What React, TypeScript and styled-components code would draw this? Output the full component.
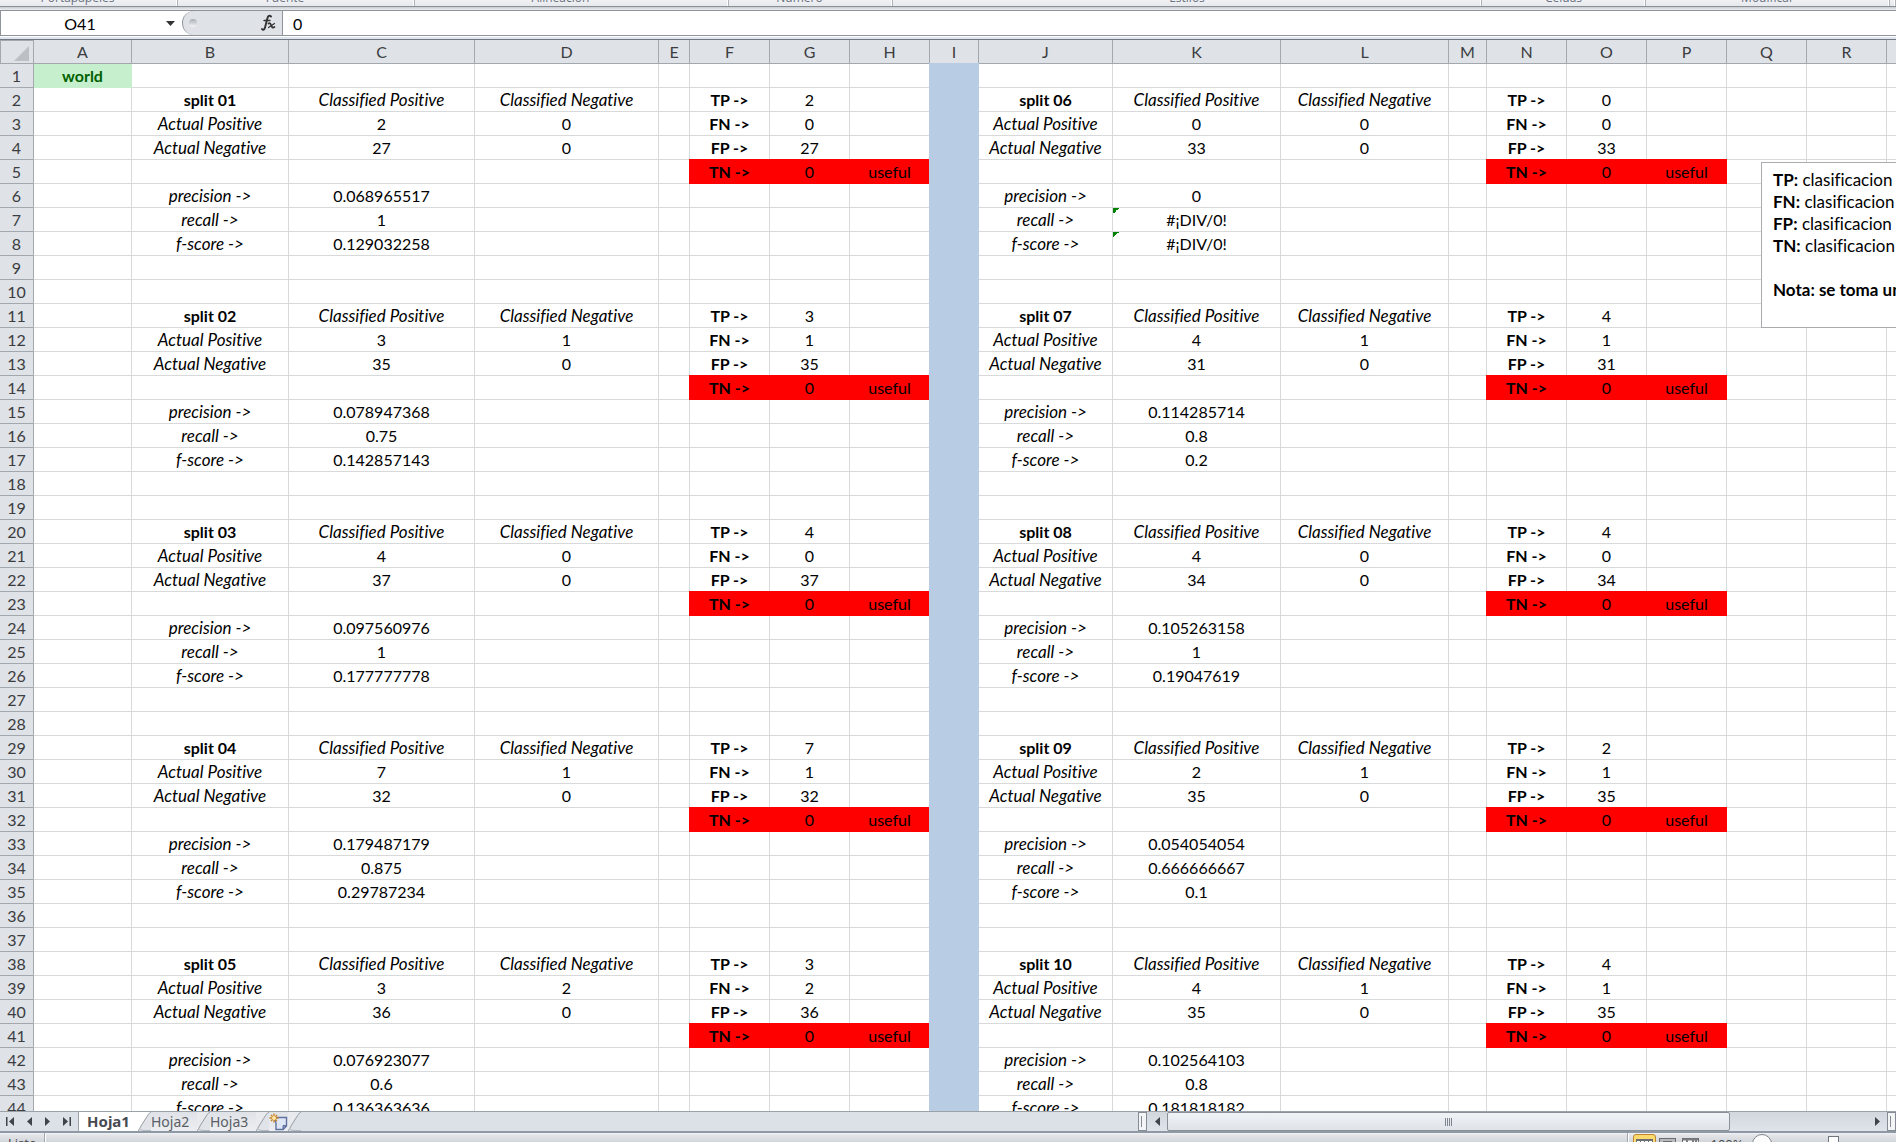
import React from "react";
import styled, { createGlobalStyle, css } from "styled-components";

const GlobalStyle = createGlobalStyle`
  * { box-sizing: border-box; }
  html, body { margin: 0; padding: 0; }
  body {
    font-family: Lato, "Noto Sans", sans-serif;
    font-size: 16px;
    font-variant-ligatures: none;
    color: #000;
    background: #fff;
  }
  button, input { font: inherit; color: inherit; margin: 0; padding: 0; border: 0; background: none; border-radius: 0; }
`;

/* ---------- shell ---------- */

const Shell = styled.div`
  display: flex;
  flex-direction: column;
  height: 100vh;
  overflow: hidden;
`;

/* ---------- ribbon ---------- */

const Ribbon = styled.div`
  flex: 0 0 7px;
  display: flex;
  align-items: flex-end;
  overflow: hidden;
  background: linear-gradient(#f0f1f4, #e6e9ed);
  border-bottom: 1px solid #8a8f95;
`;

const RibbonGroup = styled.div<{ $width?: number }>`
  flex: ${(p) => (p.$width ? `0 1 ${p.$width}px` : "1 1 0")};
  display: flex;
  align-items: flex-end;
  height: 100%;
  border-right: 1px solid #aeb3ba;
  box-shadow: inset -1px 0 0 #fff;
`;

const RibbonLabel = styled.span`
  flex: 1;
  text-align: center;
  font-family: "Open Sans", sans-serif;
  font-size: 12px;
  line-height: 16px;
  color: #6a7180;
`;

const Launcher = styled.button`
  flex: 0 0 22px;
  height: 16px;
  display: flex;
  align-items: center;
  padding-left: 14px;
  &::after { content: ""; width: 5px; height: 5px; margin-bottom: 4px; border-right: 2px solid #7d828b; border-bottom: 2px solid #7d828b; }
`;

/* ---------- formula bar ---------- */

const FormulaBar = styled.div`
  flex: 0 0 33px;
  padding: 3px 0;
  background: linear-gradient(#c8ccd0 0, #eceef1 3px, #fff 3px, #fff 30px, #dfe4ee 30px);
  border-bottom: 1px solid #6f7880;
`;

const FormulaRow = styled.div`
  display: flex;
  height: 26px;
  background: #fff;
  border: solid #8f949b;
  border-width: 1px 0 1px 1px;
`;

const NameInput = styled.input`
  width: 158px;
  text-align: center;
  outline: none;
`;

const NameDrop = styled.button`
  width: 23px;
  display: flex;
  align-items: center;
  justify-content: center;
`;

const FunctionArea = styled.div`
  width: 101px;
  display: flex;
  align-items: center;
  justify-content: space-between;
  padding: 0 6px;
  background: #dfe2e7;
  border: solid #8f949b;
  border-width: 0 1px 0 1px;
  border-radius: 12px 0 0 12px;
`;

const Knob = styled.span`
  width: 8px;
  height: 8px;
  border-radius: 4px;
  background: linear-gradient(#a9adb3, #f6f7f8);
`;

const FxButton = styled.button`
  display: flex;
`;

const FormulaInput = styled.input`
  flex: 1;
  padding-left: 10px;
  outline: none;
`;

/* ---------- sheet ---------- */

const SheetArea = styled.main`
  flex: 1;
  min-height: 0;
  position: relative;
  overflow: hidden;
`;

const Table = styled.table<{ $width: number }>`
  table-layout: fixed;
  width: ${(p) => p.$width}px;
  border-collapse: separate;
  border-spacing: 0;
`;

const headerCell = css`
  height: 24px;
  padding: 0;
  line-height: 23px;
  font-weight: 400;
  color: #3b3d40;
  background: #dfe2e7;
  border: solid #a3a8af;
  border-width: 0 1px 1px 0;
  text-align: center;
`;

const Heading = styled.th`
  ${headerCell}
`;

const Corner = styled.td`
  ${headerCell}
  border-width: 1px;
`;

const CornerMark = styled.svg`
  display: block;
  margin: 3px 4px 0 auto;
`;

const fills = { red: "#ff0000", green: "#c6efce", blue: "#b8cce4" };
type Fill = keyof typeof fills;
type Look = "plain" | "bold" | "italic";

const Cell = styled.td<{ $fill?: Fill; $look?: Look; $error?: boolean }>`
  height: 24px;
  padding: 0;
  line-height: 23px;
  text-align: center;
  white-space: nowrap;
  border: solid #d8d9db;
  border-width: 0 1px 1px 0;
  font-weight: ${(p) => (p.$look === "bold" ? 700 : 400)};
  ${(p) =>
    p.$look === "italic" &&
    css`
      font-style: italic;
      font-size: 17px;
    `}
  ${(p) =>
    p.$fill &&
    css`
      background: ${fills[p.$fill]};
      border-color: ${fills[p.$fill]};
    `}
  ${(p) =>
    (p.$fill === "red" || p.$fill === "blue") &&
    css`
      box-shadow: -1px 0 0 ${fills[p.$fill]}, 0 -1px 0 ${fills[p.$fill]}, -1px -1px 0 ${fills[p.$fill]};
    `}
  ${(p) => p.$fill === "green" && css`color: #006100;`}
  ${(p) =>
    p.$error &&
    css`
      background: linear-gradient(135deg, #008000 50%, transparent 50%) 0 0 / 6px 6px no-repeat;
    `}
`;

const Note = styled.aside`
  position: absolute;
  left: 1761px;
  top: 122px;
  width: 420px;
  height: 166px;
  padding: 6px 11px;
  background: #fff;
  border: 1px solid #a9abae;
  font-size: 17px;
  line-height: 22px;
  white-space: nowrap;
  p { margin: 0; min-height: 22px; }
`;

/* ---------- sheet tabs and scroll bar ---------- */

const TabBar = styled.div`
  flex: 0 0 22px;
  display: flex;
  background: #dce0e7;
  border-top: 1px solid #9ba1a9;
  border-bottom: 2px solid #8f99a6;
`;

const TabNav = styled.div`
  width: 79px;
  display: flex;
  justify-content: space-between;
  padding: 0 7px 0 6px;
  border-right: 1px solid #9ba1a9;
`;

const IconButton = styled.button`
  display: flex;
  align-items: center;
  justify-content: center;
`;

const Tab = styled.button<{ $active?: boolean; $width: number }>`
  width: ${(p) => p.$width}px;
  display: flex;
  align-items: center;
  justify-content: ${(p) => (p.$active ? "center" : "flex-start")};
  font-family: "Noto Sans", sans-serif;
  font-size: ${(p) => (p.$active ? 15 : 14)}px;
  line-height: 19px;
  font-weight: ${(p) => (p.$active ? 700 : 400)};
  color: ${(p) => (p.$active ? "#474b52" : "#5a5e66")};
  background: ${(p) => (p.$active ? "#fff" : "linear-gradient(#dfe2e7, #eceef1)")};
`;

const TabSpace = styled.div`
  flex: 1;
`;

const Splitter = styled.div`
  width: 9px;
  background: #f3f4f6;
  border: 1px solid #858b94;
  padding: 3px 2px;
  &::after { content: ""; display: block; width: 1px; height: 100%; background: #858b94; }
`;

const HScroll = styled.div`
  flex: 0 0 740px;
  display: flex;
  background: linear-gradient(#d2d7de, #dfe3ea);
`;

const ScrollArrow = styled.button`
  width: 20px;
  display: flex;
  align-items: center;
  justify-content: center;
`;

const Track = styled.div`
  flex: 1;
`;

const Thumb = styled.div`
  width: 563px;
  height: 100%;
  display: flex;
  align-items: center;
  justify-content: center;
  gap: 1px;
  background: linear-gradient(#f0f3f6, #dfe3e8);
  border: 1px solid #8a9097;
  border-radius: 2px;
`;

const Grip = styled.i`
  width: 1px;
  height: 8px;
  background: #7f858d;
`;

/* ---------- status bar ---------- */

const StatusBar = styled.footer`
  flex: 0 0 9px;
  display: flex;
  align-items: flex-start;
  overflow: hidden;
  background: linear-gradient(#f2f3f5 0, #e3e5e8 2px, #d2d5da 9px);
  font-family: "Open Sans", sans-serif;
  font-size: 13px;
  line-height: 20px;
  color: #3f4247;
`;

const StatusText = styled.span`
  width: 44px;
  padding-left: 8px;
`;

const StatusRule = styled.i`
  width: 2px;
  height: 24px;
  background: #a0a5ad;
  border-right: 1px solid #fff;
`;

const StatusSpace = styled.div`
  flex: 1;
`;

const ViewButton = styled.button<{ $active?: boolean }>`
  width: 23px;
  height: 24px;
  margin-top: 1px;
  margin-left: ${(p) => (p.$active ? 4 : 0)}px;
  display: flex;
  justify-content: center;
  padding-top: 4px;
  ${(p) =>
    p.$active &&
    css`
      background: linear-gradient(#fbd96b, #fce792);
      border: 1px solid #c1862c;
      border-radius: 3px;
    `}
`;

const ZoomLabel = styled.label`
  width: 50px;
  padding-top: 1px;
  text-align: center;
`;

const ZoomOut = styled.button`
  width: 20px;
  height: 20px;
  margin-top: 1px;
  border: 1px solid #80858d;
  border-radius: 10px;
  background: #fcfcfd;
`;

const ZoomRange = styled.input`
  appearance: none;
  width: 110px;
  height: 20px;
  margin: 3px 8px 0 6px;
  &::-webkit-slider-thumb {
    appearance: none;
    width: 11px;
    height: 20px;
    background: #fff;
    border: 1px solid #707680;
  }
`;

/* ---------- data ---------- */

const columns: [string, number][] = [
  ["A", 98], ["B", 157], ["C", 186], ["D", 184], ["E", 31], ["F", 80],
  ["G", 80], ["H", 80], ["I", 49], ["J", 134], ["K", 168], ["L", 168],
  ["M", 38], ["N", 80], ["O", 80], ["P", 80], ["Q", 80], ["R", 80], ["S", 80],
];
const rowHeadWidth = 34;
const tableWidth = columns.reduce((sum, c) => sum + c[1], rowHeadWidth);
const rowCount = 44;

type Split = { name: string; tp: number; fn: number; fp: number; scores: string[] };

const leftSplits: Split[] = [
  { name: "split 01", tp: 2, fn: 0, fp: 27, scores: ["0.068965517", "1", "0.129032258"] },
  { name: "split 02", tp: 3, fn: 1, fp: 35, scores: ["0.078947368", "0.75", "0.142857143"] },
  { name: "split 03", tp: 4, fn: 0, fp: 37, scores: ["0.097560976", "1", "0.177777778"] },
  { name: "split 04", tp: 7, fn: 1, fp: 32, scores: ["0.179487179", "0.875", "0.29787234"] },
  { name: "split 05", tp: 3, fn: 2, fp: 36, scores: ["0.076923077", "0.6", "0.136363636"] },
];
const rightSplits: Split[] = [
  { name: "split 06", tp: 0, fn: 0, fp: 33, scores: ["0", "#¡DIV/0!", "#¡DIV/0!"] },
  { name: "split 07", tp: 4, fn: 1, fp: 31, scores: ["0.114285714", "0.8", "0.2"] },
  { name: "split 08", tp: 4, fn: 0, fp: 34, scores: ["0.105263158", "1", "0.19047619"] },
  { name: "split 09", tp: 2, fn: 1, fp: 35, scores: ["0.054054054", "0.666666667", "0.1"] },
  { name: "split 10", tp: 4, fn: 1, fp: 35, scores: ["0.102564103", "0.8", "0.181818182"] },
];

type CellData = { text?: string | number; look?: Look; fill?: Fill; error?: boolean };
const cells: Record<string, CellData> = { A1: { text: "world", look: "bold", fill: "green" } };

function placeSplit(s: Split, row: number, cols: string) {
  const [label, pos, neg, tag, value, remark] = cols.split("");
  const put = (col: string, offset: number, text: string | number, look: Look = "plain", fill?: Fill) => {
    cells[col + (row + offset)] = { text, look, fill, error: String(text).startsWith("#") };
  };
  put(label, 0, s.name, "bold");
  put(pos, 0, "Classified Positive", "italic");
  put(neg, 0, "Classified Negative", "italic");
  put(label, 1, "Actual Positive", "italic");
  put(pos, 1, s.tp);
  put(neg, 1, s.fn);
  put(label, 2, "Actual Negative", "italic");
  put(pos, 2, s.fp);
  put(neg, 2, 0);
  [["TP ->", s.tp], ["FN ->", s.fn], ["FP ->", s.fp]].forEach(([t, v], i) => {
    put(tag, i, t, "bold");
    put(value, i, v);
  });
  put(tag, 3, "TN ->", "bold", "red");
  put(value, 3, 0, "plain", "red");
  put(remark, 3, "useful", "plain", "red");
  ["precision ->", "recall ->", "f-score ->"].forEach((t, i) => {
    put(label, 4 + i, t, "italic");
    put(pos, 4 + i, s.scores[i]);
  });
}
leftSplits.forEach((s, i) => placeSplit(s, 2 + i * 9, "BCDFGH"));
rightSplits.forEach((s, i) => placeSplit(s, 2 + i * 9, "JKLNOP"));
for (let r = 1; r <= rowCount; r++) cells["I" + r] = { fill: "blue" };

const ribbonGroups: { name: string; width?: number; launcher?: boolean }[] = [
  { name: "Portapapeles", width: 178, launcher: true },
  { name: "Fuente", width: 237, launcher: true },
  { name: "Alineación", width: 314, launcher: true },
  { name: "Número", width: 164, launcher: true },
  { name: "Estilos" },
  { name: "Celdas", width: 164 },
  { name: "Modificar", width: 244 },
];

/* ---------- drawings ---------- */

const Arrow = ({ dir, bar }: { dir: "left" | "right"; bar?: boolean }) => (
  <svg width="9" height="11" viewBox="0 0 9 11" fill="#3f444b" transform={dir === "right" ? "scale(-1 1)" : undefined}>
    {bar && <rect x="0" y="1" width="1.5" height="9" />}
    <path d={bar ? "M8 1v9L3 5.500z" : "M7 1v9L2 5.500z"} />
  </svg>
);

const Slant = ({ before = "#e8eaee", after = "#e0e3e8" }: { before?: string; after?: string }) => (
  <svg width="13" height="19" viewBox="0 0 13 19">
    <rect width="13" height="19" fill={after} />
    <path d="M0 0H13C11 1 10 3 8 6L3 14Q1 18 0 19z" fill={before} />
    <path d="M13 0C11 1 10 3 8 6L3 14Q1 18 0 19" fill="none" stroke="#989da5" />
    <path d="M1 16Q2 18.500 6 18.500H13" fill="none" stroke="#b5b9c0" />
  </svg>
);

const NewSheet = () => (
  <svg width="19" height="18" viewBox="0 0 19 18">
    <path d="M5 4.500H17.500V13L14 16.500H7V10z" fill="#dfe7f6" stroke="#5f719f" strokeWidth="1.4" />
    <path d="M17.500 12.500H14V16.500z" fill="#8395c0" stroke="#5f719f" />
    <path d="M5 0.500V9.500M0.500 5H9.500M2 2L8 8M8 2L2 8" stroke="#c9811d" strokeWidth="1.3" />
    <circle cx="5" cy="5" r="2" fill="#ffe9a6" />
  </svg>
);

const ViewIcon = ({ kind }: { kind: "grid" | "page" | "break" }) => (
  <svg width="17" height="14" viewBox="0 0 17 14">
    <rect x="0.500" y="0.500" width="16" height="13" fill={kind === "page" ? "#b7b9bc" : "#fff"} stroke="#6b6d70" />
    {kind === "grid" && <path d="M1 1.500H16M4.500 1V13M8.500 1V13M12.500 1V13M1 7.500H16" stroke="#6b6d70" />}
    {kind === "page" && <rect x="4.500" y="3.500" width="8" height="10" fill="#fff" stroke="#6b6d70" />}
    {kind === "break" && <path d="M1 1.500H16M5 1V13M11 1V13M14 1V13" stroke="#7b7d80" strokeWidth="2" />}
  </svg>
);

/* ---------- app ---------- */

export default function App() {
  return (
    <Shell>
      <GlobalStyle />
      <Ribbon>
        {ribbonGroups.map((g) => (
          <RibbonGroup key={g.name} $width={g.width}>
            <RibbonLabel>{g.name}</RibbonLabel>
            {g.launcher && <Launcher aria-label={g.name} />}
          </RibbonGroup>
        ))}
        <RibbonGroup $width={6} />
      </Ribbon>

      <FormulaBar>
        <FormulaRow>
          <NameInput aria-label="Cuadro de nombres" defaultValue="O41" />
          <NameDrop aria-label="Nombres">
            <svg width="9" height="5" viewBox="0 0 9 5"><path d="M0 0H9L4.500 5z" fill="#333" /></svg>
          </NameDrop>
          <FunctionArea>
            <Knob />
            <FxButton aria-label="Insertar función">
              <svg width="15" height="18" viewBox="0 0 15 18" fill="none" stroke="#333" strokeLinecap="round">
                <path d="M10 2.500C8.500 1 7 2 6.500 4L4 13.500C3.500 15.500 2 16.500 1 15" strokeWidth="1.900" />
                <path d="M3 6.500H9" strokeWidth="1.400" />
                <path d="M7.500 9.500C9 8.500 9.500 10 10.500 12S12 14 13.500 13" strokeWidth="1.700" />
                <path d="M13.500 9.500L7.500 13.500" strokeWidth="1.200" />
              </svg>
            </FxButton>
          </FunctionArea>
          <FormulaInput aria-label="Barra de fórmulas" defaultValue="0" />
        </FormulaRow>
      </FormulaBar>

      <SheetArea>
        <Table $width={tableWidth}>
          <colgroup>
            <col width={rowHeadWidth} />
            {columns.map(([name, width]) => <col key={name} width={width} />)}
          </colgroup>
          <thead>
            <tr>
              <Corner>
                <CornerMark width="15" height="15" viewBox="0 0 15 15"><path d="M15 0V15H0z" fill="#bcc0c5" /></CornerMark>
              </Corner>
              {columns.map(([name]) => <Heading key={name} scope="col">{name}</Heading>)}
            </tr>
          </thead>
          <tbody>
            {Array.from({ length: rowCount }, (_, i) => i + 1).map((row) => (
              <tr key={row}>
                <Heading scope="row">{row}</Heading>
                {columns.map(([name]) => {
                  const c = cells[name + row] ?? {};
                  return (
                    <Cell key={name} $fill={c.fill} $look={c.look} $error={c.error}>{c.text}</Cell>
                  );
                })}
              </tr>
            ))}
          </tbody>
        </Table>
        <Note>
          <p><b>TP:</b> clasificacion correcta</p>
          <p><b>FN:</b> clasificacion</p>
          <p><b>FP:</b> clasificacion incorrecta</p>
          <p><b>TN:</b> clasificacion</p>
          <p />
          <p><b>Nota: se toma un</b></p>
        </Note>
      </SheetArea>

      <TabBar>
        <TabNav>
          <IconButton aria-label="Primera hoja"><Arrow dir="left" bar /></IconButton>
          <IconButton aria-label="Hoja anterior"><Arrow dir="left" /></IconButton>
          <IconButton aria-label="Hoja siguiente"><Arrow dir="right" /></IconButton>
          <IconButton aria-label="Última hoja"><Arrow dir="right" bar /></IconButton>
        </TabNav>
        <Tab $active $width={59}>Hoja1</Tab>
        <Slant before="#fff" />
        <Tab $width={46}>Hoja2</Tab>
        <Slant />
        <Tab $width={46}>Hoja3</Tab>
        <Slant />
        <Tab $width={19} aria-label="Insertar hoja"><NewSheet /></Tab>
        <Slant after="#dce0e7" />
        <TabSpace />
        <Splitter />
        <HScroll>
          <ScrollArrow aria-label="Desplazar a la izquierda"><Arrow dir="left" /></ScrollArrow>
          <Track>
            <Thumb><Grip /><Grip /><Grip /><Grip /></Thumb>
          </Track>
          <ScrollArrow aria-label="Desplazar a la derecha"><Arrow dir="right" /></ScrollArrow>
        </HScroll>
        <Splitter />
      </TabBar>

      <StatusBar>
        <StatusText>Listo</StatusText>
        <StatusRule />
        <StatusSpace />
        <StatusRule />
        <ViewButton $active aria-label="Normal"><ViewIcon kind="grid" /></ViewButton>
        <ViewButton aria-label="Diseño de página"><ViewIcon kind="page" /></ViewButton>
        <ViewButton aria-label="Salto de página"><ViewIcon kind="break" /></ViewButton>
        <ZoomLabel htmlFor="zoom">100%</ZoomLabel>
        <ZoomOut aria-label="Alejar" />
        <ZoomRange id="zoom" type="range" min={0} max={100} defaultValue={50} />
      </StatusBar>
    </Shell>
  );
}
